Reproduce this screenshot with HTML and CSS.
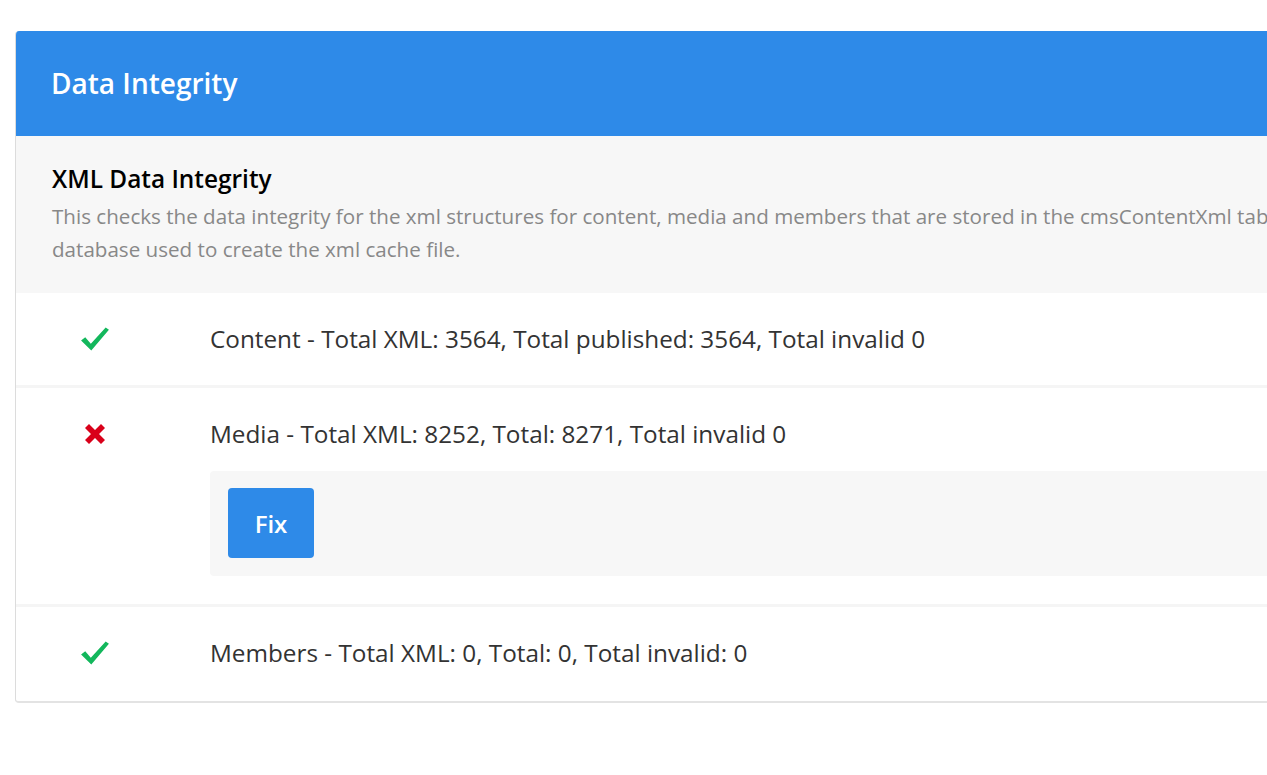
FILE: index.html
```
<!DOCTYPE html>
<html>
  <head>
    <meta charset="utf-8">
    <title>Data Integrity</title>
    <link rel="stylesheet" href="styles.css">
  </head>
  <body>
    <div class="card">
      <div class="card-header">Data Integrity</div>

      <div class="card-intro">
        <div class="intro-title">XML Data Integrity</div>
        <div class="intro-text">This checks the data integrity for the xml structures for content, media and members that are stored in the cmsContentXml table in the database used to create the xml cache file.</div>
      </div>

      <div class="check-row">
        <div class="check-icon">
          <svg width="30" height="26" viewBox="0 0 32 28"><path d="M1 15.5 L5.5 12 L11.5 19 L27.5 1.5 L31 4 L12 26.5 Z" fill="#13b75c"/></svg>
        </div>
        <div class="check-body">
          <div class="check-text">Content - Total XML: 3564, Total published: 3564, Total invalid 0</div>
        </div>
      </div>

      <div class="check-row has-fix">
        <div class="check-icon">
          <svg width="20" height="20" viewBox="0 0 20 20"><path d="M0 4 L4 0 L10 6 L16 0 L20 4 L14 10 L20 16 L16 20 L10 14 L4 20 L0 16 L6 10 Z" fill="#d9001a"/></svg>
        </div>
        <div class="check-body">
          <div class="check-text">Media - Total XML: 8252, Total: 8271, Total invalid 0</div>
          <div class="fix-panel">
            <button class="btn-fix">Fix</button>
          </div>
        </div>
      </div>

      <div class="check-row">
        <div class="check-icon">
          <svg width="30" height="26" viewBox="0 0 32 28"><path d="M1 15.5 L5.5 12 L11.5 19 L27.5 1.5 L31 4 L12 26.5 Z" fill="#13b75c"/></svg>
        </div>
        <div class="check-body">
          <div class="check-text">Members - Total XML: 0, Total: 0, Total invalid: 0</div>
        </div>
      </div>
    </div>
  </body>
</html>
```

FILE: styles.css
```
html, body {
  margin: 0;
  padding: 0;
  background: #fff;
  overflow: hidden;
}

body {
  padding: 31px 0 0 15px;
  font-family: "Open Sans", "Noto Sans", sans-serif;
  color: #333;
}

.card {
  width: 1500px;
  border-left: 1px solid #dcdcdc;
  border-bottom: 2px solid #e3e3e3;
  border-radius: 4px 0 0 4px;
  overflow: hidden;
}

.card-header {
  background: #2e8ae8;
  color: #fff;
  font-size: 28px;
  font-weight: 600;
  line-height: 38px;
  padding: 33px 35px 34px;
}

.card-intro {
  background: #f7f7f7;
  padding: 28px 36px 27px;
}

.intro-title {
  font-size: 24.4px;
  font-weight: 600;
  color: #000;
  line-height: 30px;
  margin-bottom: 6px;
}

.intro-text {
  font-size: 20.6px;
  color: #888;
  line-height: 33px;
  width: 1340px;
}

.check-row {
  display: flex;
  padding: 30px 0;
  border-bottom: 3px solid #f5f5f5;
}

.check-row.has-fix {
  padding-bottom: 28px;
}

.check-row:last-child {
  border-bottom: none;
  padding-bottom: 32px;
}

.check-icon {
  width: 158px;
  height: 32px;
  flex: 0 0 auto;
  display: flex;
  align-items: center;
  justify-content: center;
}

.check-body {
  flex: 1 1 auto;
  margin-left: 36px;
}

.check-text {
  font-size: 24.3px;
  line-height: 32px;
}

.fix-panel {
  margin-top: 21px;
  background: #f7f7f7;
  border-radius: 4px 0 0 4px;
  padding: 17px 18px 18px;
}

.btn-fix {
  display: block;
  width: 86px;
  height: 70px;
  border: none;
  border-radius: 4px;
  background: #2e8ae8;
  color: #fff;
  font-family: "Open Sans", "Noto Sans", sans-serif;
  font-size: 24px;
  font-weight: 600;
  padding: 0;
}
```
